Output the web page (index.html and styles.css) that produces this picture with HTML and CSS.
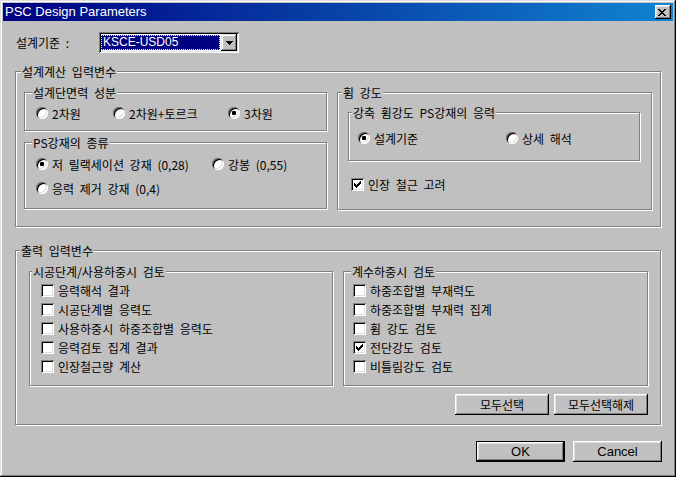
FILE: index.html
```html
<!DOCTYPE html>
<html>
<head>
    <meta charset="utf-8">
    <link rel="stylesheet" href="styles.css">
</head>
<body>
<div class="window">
    <div class="titlebar">
        <span class="title-text">PSC Design Parameters</span>
        <button class="close-btn" title="Close">
            <svg width="8" height="7" viewBox="0 0 8 7" shape-rendering="crispEdges"><path fill="#000" d="M0 0h2v1h-2z M6 0h2v1h-2z M1 1h2v1h-2z M5 1h2v1h-2z M2 2h4v1h-4z M3 3h2v1h-2z M2 4h4v1h-4z M1 5h2v1h-2z M5 5h2v1h-2z M0 6h2v1h-2z M6 6h2v1h-2z"/></svg>
        </button>
    </div>

    <div class="dialog-body">
        <div class="code-row">
            <span class="code-label">설계기준 :</span>
            <div class="combo">
                <div class="combo-value"><span class="combo-sel">KSCE-USD05</span></div>
                <span class="combo-btn">
                    <svg width="7" height="4" viewBox="0 0 7 4" shape-rendering="crispEdges"><path fill="#000" d="M0 0h7v1h-7z M1 1h5v1h-5z M2 2h3v1h-3z M3 3h1v1h-1z"/></svg>
                </span>
            </div>
        </div>

        <!-- 설계계산 입력변수 -->
        <fieldset class="group group-calc">
            <legend>설계계산 입력변수</legend>
            <div class="calc-body">
                <div class="calc-left">
                    <fieldset class="group group-force">
                        <legend>설계단면력 성분</legend>
                        <div class="force-body">
                            <label class="opt"><span class="radio"></span>2차원</label>
                            <label class="opt"><span class="radio"></span>2차원+토르크</label>
                            <label class="opt"><span class="radio checked"></span>3차원</label>
                        </div>
                    </fieldset>
                    <fieldset class="group group-ps">
                        <legend>PS강재의 종류</legend>
                        <div class="ps-body">
                            <label class="opt"><span class="radio checked"></span>저 릴랙세이션 강재 (0,28)</label>
                            <label class="opt"><span class="radio"></span>강봉 (0,55)</label>
                            <label class="opt"><span class="radio"></span>응력 제거 강재 (0,4)</label>
                        </div>
                    </fieldset>
                </div>

                <fieldset class="group group-bend">
                    <legend>휨 강도</legend>
                    <div class="bend-body">
                        <fieldset class="group group-axis">
                            <legend>강축 휨강도 PS강재의 응력</legend>
                            <div class="axis-body">
                                <label class="opt"><span class="radio checked"></span>설계기준</label>
                                <label class="opt"><span class="radio"></span>상세 해석</label>
                            </div>
                        </fieldset>
                        <label class="opt opt-check rebar">
                            <span class="check"><svg width="7" height="7" viewBox="0 0 7 7" shape-rendering="crispEdges"><path fill="#000" d="M6 0h1v1h-1z M5 1h2v1h-2z M0 2h1v1h-1z M4 2h3v1h-3z M0 3h2v1h-2z M3 3h3v1h-3z M0 4h5v1h-5z M1 5h3v1h-3z M2 6h1v1h-1z"/></svg></span>
                            인장 철근 고려
                        </label>
                    </div>
                </fieldset>
            </div>
        </fieldset>

        <!-- 출력 입력변수 -->
        <fieldset class="group group-out">
            <legend>출력 입력변수</legend>
            <div class="out-body">
                <div class="out-cols">
                    <fieldset class="group group-serv">
                        <legend>시공단계/사용하중시 검토</legend>
                        <div class="check-list">
                            <label class="opt opt-check"><span class="check"></span>응력해석 결과</label>
                            <label class="opt opt-check"><span class="check"></span>시공단계별 응력도</label>
                            <label class="opt opt-check"><span class="check"></span>사용하중시 하중조합별 응력도</label>
                            <label class="opt opt-check"><span class="check"></span>응력검토 집계 결과</label>
                            <label class="opt opt-check"><span class="check"></span>인장철근량 계산</label>
                        </div>
                    </fieldset>
                    <fieldset class="group group-fact">
                        <legend>계수하중시 검토</legend>
                        <div class="check-list">
                            <label class="opt opt-check"><span class="check"></span>하중조합별 부재력도</label>
                            <label class="opt opt-check"><span class="check"></span>하중조합별 부재력 집계</label>
                            <label class="opt opt-check"><span class="check"></span>휨 강도 검토</label>
                            <label class="opt opt-check"><span class="check"><svg width="7" height="7" viewBox="0 0 7 7" shape-rendering="crispEdges"><path fill="#000" d="M6 0h1v1h-1z M5 1h2v1h-2z M0 2h1v1h-1z M4 2h3v1h-3z M0 3h2v1h-2z M3 3h3v1h-3z M0 4h5v1h-5z M1 5h3v1h-3z M2 6h1v1h-1z"/></svg></span>전단강도 검토</label>
                            <label class="opt opt-check"><span class="check"></span>비틀림강도 검토</label>
                        </div>
                    </fieldset>
                </div>
                <div class="out-actions">
                    <button class="btn">모두선택</button>
                    <button class="btn">모두선택해제</button>
                </div>
            </div>
        </fieldset>

        <div class="footer">
            <button class="btn btn-latin btn-default">OK</button>
            <button class="btn btn-latin">Cancel</button>
        </div>
    </div>
</div>
</body>
</html>
```

FILE: styles.css
```css
* {
    margin: 0;
    padding: 0;
    box-sizing: border-box;
}

body {
    width: 676px;
    height: 477px;
    overflow: hidden;
    background: #c0c0c0;
    font-family: "Noto Sans CJK KR", "Liberation Sans", sans-serif;
    font-size: 12px;
    color: #000;
}

.window {
    width: 676px;
    height: 477px;
    padding: 3px;
    background: #c0c0c0;
    box-shadow: inset -1px -1px #000, inset 1px 1px #dfdfdf, inset -2px -2px #808080, inset 2px 2px #fff;
}

/* Title bar */
.titlebar {
    display: flex;
    align-items: center;
    justify-content: space-between;
    height: 18px;
    padding: 0 2px;
    background: linear-gradient(to right, #000080, #1084d0);
}

.title-text {
    font-family: "Liberation Sans", sans-serif;
    font-size: 13px;
    line-height: 18px;
    color: #fff;
}

.close-btn {
    display: flex;
    align-items: center;
    justify-content: center;
    width: 16px;
    height: 14px;
    padding-right: 2px;
    border: none;
    background: #c0c0c0;
    box-shadow: inset -1px -1px #000, inset 1px 1px #fff, inset -2px -2px #808080, inset 2px 2px #dfdfdf;
}

.dialog-body {
    padding: 0 12px;
}

/* Code selector */
.code-row {
    display: flex;
    align-items: center;
    margin-top: 11px;
}

.code-label {
    width: 84px;
    padding-left: 1px;
    word-spacing: 3px;
}

.combo {
    display: flex;
    width: 140px;
    height: 21px;
    padding: 2px;
    background: #fff;
    box-shadow: inset 1px 1px #808080, inset -1px -1px #fff, inset 2px 2px #000, inset -2px -2px #dfdfdf;
}

.combo-value {
    flex: 1;
    padding: 1px 1px 1px 0;
}

.combo-sel {
    display: block;
    height: 100%;
    padding-left: 1px;
    background: #000080;
    border: 1px dotted #ffff60;
    color: #fff;
    font-family: "Liberation Sans", sans-serif;
    font-size: 12px;
    line-height: 13px;
}

.combo-btn {
    display: flex;
    align-items: center;
    justify-content: center;
    width: 16px;
    background: #c0c0c0;
    box-shadow: inset -1px -1px #000, inset 1px 1px #dfdfdf, inset -2px -2px #808080, inset 2px 2px #fff;
}

/* Etched group boxes */
.group {
    min-width: 0;
    border: 1px solid #808080;
    box-shadow: 1px 1px 0 #fff, inset 1px 1px 0 #fff;
}

.group > legend {
    padding: 0 1px;
    margin-left: 6px;
    line-height: 15px;
    background: #c0c0c0;
    word-spacing: 3px;
}

.group-calc { margin-top: 11px; }
.group-calc > legend { margin-left: 5px; }
.group-force > legend,
.group-ps > legend { margin-left: 7px; }
.group-bend > legend { margin-left: 4px; }
.group-axis > legend { margin-left: 3px; }
.group-out { margin-top: 16px; }
.group-out > legend { margin-left: 4px; }
.group-serv > legend { margin-left: 2px; }
.group-fact > legend { margin-left: 7px; }

.calc-body {
    display: grid;
    grid-template-columns: 303px 315px;
    column-gap: 10px;
    align-items: start;
    padding: 6px 8px 16px 8px;
}

.calc-left {
    display: flex;
    flex-direction: column;
    gap: 4px;
}

.force-body {
    display: grid;
    grid-template-columns: 77px 115px auto;
    padding: 4px 0 8px 11px;
}

.ps-body {
    display: grid;
    grid-template-columns: 176px auto;
    row-gap: 6px;
    padding: 5px 0 11px 11px;
}

.bend-body {
    padding: 5px 11px 16px 10px;
}

.axis-body {
    display: grid;
    grid-template-columns: 148px auto;
    padding: 9px 0 13px 9px;
}

.rebar {
    margin: 14px 0 0 3px;
}

/* Radio / checkbox options */
.opt {
    display: flex;
    align-items: center;
    gap: 4px;
    height: 18px;
    white-space: nowrap;
    word-spacing: 3px;
}

.opt-check {
    height: 19px;
}

.rebar.opt-check {
    height: 18px;
}

.radio {
    display: flex;
    align-items: center;
    justify-content: center;
    flex: none;
    width: 12px;
    height: 12px;
    border-radius: 50%;
    background: #fff;
    box-shadow: inset 1px 1px #808080, inset -1px -1px #fff, inset 2px 2px #000, inset -2px -2px #dfdfdf;
}

.radio.checked::after {
    content: "";
    width: 4px;
    height: 4px;
    border-radius: 1px;
    background: #000;
}

.check {
    display: flex;
    align-items: center;
    justify-content: center;
    flex: none;
    width: 13px;
    height: 13px;
    background: #fff;
    box-shadow: inset 1px 1px #808080, inset -1px -1px #fff, inset 2px 2px #000, inset -2px -2px #dfdfdf;
}

/* Output section */
.out-body {
    padding: 6px 12px 9px 13px;
}

.out-cols {
    display: grid;
    grid-template-columns: 304px 305px;
    column-gap: 10px;
}

.check-list {
    display: flex;
    flex-direction: column;
    padding: 2px 0 9px 11px;
}

.group-fact .check-list {
    padding-left: 9px;
}

.out-actions {
    display: flex;
    justify-content: flex-end;
    gap: 5px;
    margin-top: 8px;
}

/* Buttons */
.btn {
    width: 94px;
    height: 21px;
    border: none;
    background: #c0c0c0;
    font: inherit;
    color: #000;
    word-spacing: 3px;
    box-shadow: inset -1px -1px #000, inset 1px 1px #fff, inset -2px -2px #808080, inset 2px 2px #dfdfdf;
}

.btn-latin {
    width: 89px;
    font-family: "Liberation Sans", sans-serif;
    font-size: 13px;
}

.btn-default {
    border: 1px solid #000;
}

.footer {
    display: flex;
    justify-content: flex-end;
    gap: 8px;
    margin: 16px -1px 0 0;
}
```
